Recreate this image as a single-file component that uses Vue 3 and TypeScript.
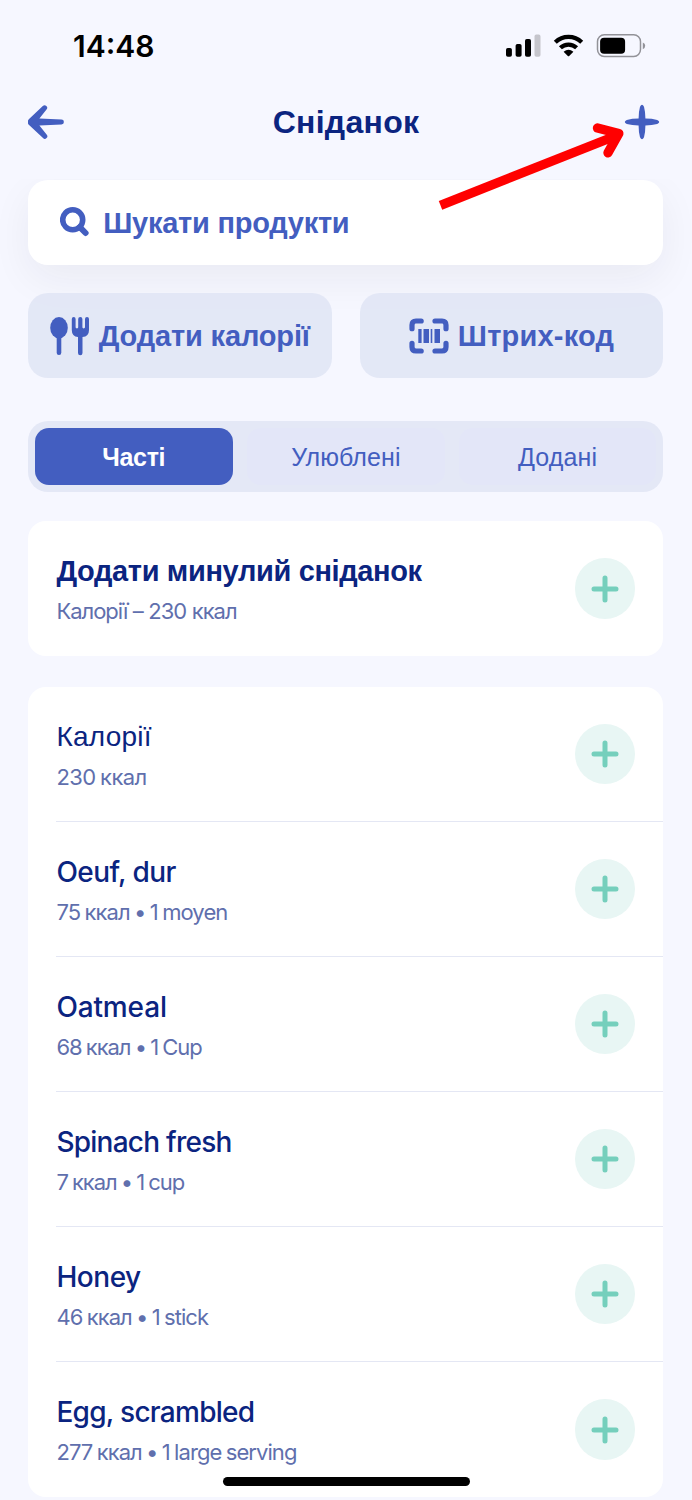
<script setup lang="ts">
interface Food {
  name: string
  detail: string
  nameSpacing: number
  detailSpacing: number
}

const tabs = ['Часті', 'Улюблені', 'Додані']

const foods: Food[] = [
  { name: 'Калорії', detail: '230 ккал', nameSpacing: 0.25, detailSpacing: -0.6 },
  { name: 'Oeuf, dur', detail: '75 ккал • 1 moyen', nameSpacing: -0.55, detailSpacing: -0.9 },
  { name: 'Oatmeal', detail: '68 ккал • 1 Cup', nameSpacing: -0.15, detailSpacing: -1.03 },
  { name: 'Spinach fresh', detail: '7 ккал • 1 cup', nameSpacing: -0.75, detailSpacing: -1.05 },
  { name: 'Honey', detail: '46 ккал • 1 stick', nameSpacing: -0.45, detailSpacing: -0.93 },
  { name: 'Egg, scrambled', detail: '277 ккал • 1 large serving', nameSpacing: -0.72, detailSpacing: -0.92 },
]
</script>

<template>
  <div class="screen">
    <div class="status">
      <span class="time">14:48</span>
      <svg class="indicators" width="140" height="24" viewBox="0 0 140 24">
        <rect x="0" y="14" width="5.9" height="8.7" rx="1.8" />
        <rect x="9.6" y="10" width="6" height="12.7" rx="1.8" />
        <rect x="19" y="5" width="6" height="17.7" rx="1.8" />
        <rect x="28.5" y="0.6" width="6" height="22.1" rx="1.8" fill="#c5c5cc" />
        <g fill="none" stroke="#000" stroke-width="4.3">
          <path d="M49.3 8.2A19 19 0 0 1 75.7 8.2" />
          <path d="M54.4 13.8A11.8 11.8 0 0 1 70.6 13.8" />
        </g>
        <path d="M57.6 17.7Q62.5 13.6 67.4 17.7L63.2 22Q62.5 22.6 61.8 22Z" />
        <rect x="91.5" y="0.8" width="43" height="21.6" rx="6.8" fill="none" stroke="#929298" stroke-width="1.5" />
        <rect x="94.1" y="3.7" width="25" height="16" rx="4" />
        <path d="M136.8 8.4Q139.2 9.4 139.2 11.8Q139.2 14.2 136.8 15.3Z" fill="#929298" />
      </svg>
    </div>

    <header class="header">
      <svg width="36" height="34" viewBox="0 0 36 34" class="back">
        <path d="M.8 14.3L14.8 1.1A2.5 2.5 0 0 1 18.5 4.5L11.4 13.6L33.5 14.6A2.4 2.4 0 0 1 33.5 19.4L11.4 20.4L18.6 29.5A2.5 2.5 0 0 1 15 33L.8 19.7Q-1.4 17 .8 14.3Z" />
      </svg>
      <h1>Сніданок</h1>
      <svg width="36" height="36" viewBox="0 0 36 36" class="add">
        <path d="M16 2.8Q18 -1.4 20 2.8Q21.4 8 21.4 14.6Q28 14.6 33.2 16Q37.2 18 33.2 20Q28 21.4 21.4 21.4Q21.4 28 20 33.2Q18 37.2 16 33.2Q14.6 28 14.6 21.4Q8 21.4 2.8 20Q-1.2 18 2.8 16Q8 14.6 14.6 14.6Q14.6 8 16 2.8Z" fill="#435ec0" />
      </svg>
    </header>

    <main class="content">
      <div class="search">
        <svg width="30" height="30" viewBox="0 0 30 30" fill="none" stroke="#435ec0">
          <circle cx="12.7" cy="12.8" r="10" stroke-width="5.6" />
          <path d="M19.8 20.2L25.6 26" stroke-width="6" stroke-linecap="round" />
        </svg>
        <span>Шукати продукти</span>
      </div>

      <div class="actions">
        <button class="calories">
          <svg width="40" height="40" viewBox="0 0 40 40" fill="#435ec0">
            <ellipse cx="9" cy="11.8" rx="8.8" ry="10.7" />
            <rect x="6.7" y="18" width="4.6" height="21" rx="2.2" />
            <path d="M21.8 3A1.9 1.9 0 0 1 25.6 3V11.3Q25.6 12.4 27 12.4Q28.2 12.4 28.2 11.3V3A1.9 1.9 0 0 1 32.4 3V11.3Q32.4 12.4 33.6 12.4Q35 12.4 35 11.3V3A1.9 1.9 0 0 1 39 3V14Q39 20.5 32.5 21V37A2.2 2.2 0 0 1 28 37V21Q21.8 20.5 21.8 14Z" />
          </svg>
          <span>Додати калорії</span>
        </button>
        <button class="barcode">
          <svg width="40" height="36" viewBox="0 0 40 36">
            <g fill="none" stroke="#435ec0" stroke-width="5.2" stroke-linecap="round">
              <path d="M3 10.7V7Q3 3 7 3H12.2M26 3H33Q37 3 37 7V10.7M3 25.3V29Q3 33 7 33H12.2M26 33H33Q37 33 37 29V25.3" />
            </g>
            <path d="M9.3 11H12.6V25H9.3ZM14.5 11H20V25H14.5ZM21.7 11H23.3V25H21.7ZM25.5 11H31V25H25.5Z" fill="#435ec0" />
          </svg>
          <span>Штрих-код</span>
        </button>
      </div>

      <nav class="tabs">
        <button v-for="(tab, i) in tabs" :key="tab" :class="{ active: i === 0 }">{{ tab }}</button>
      </nav>

      <section class="card">
        <div class="row">
          <div class="text">
            <div class="name strong">Додати минулий сніданок</div>
            <div class="detail previous">Калорії – 230 ккал</div>
          </div>
          <button class="plus" aria-label="Додати">
            <svg width="28" height="28" viewBox="0 0 28 28"><path d="M14 3V25M3 14H25" /></svg>
          </button>
        </div>
      </section>

      <section class="card list">
        <div v-for="food in foods" :key="food.name" class="row">
          <div class="text">
            <div class="name" :style="{ letterSpacing: food.nameSpacing + 'px' }">{{ food.name }}</div>
            <div class="detail" :style="{ letterSpacing: food.detailSpacing + 'px' }">{{ food.detail }}</div>
          </div>
          <button class="plus" aria-label="Додати">
            <svg width="28" height="28" viewBox="0 0 28 28"><path d="M14 3V25M3 14H25" /></svg>
          </button>
        </div>
      </section>
    </main>

    <svg class="pointer" width="200" height="100" viewBox="0 0 200 100" fill="none" stroke="#f00" stroke-width="9.4">
      <path d="M10.5 95.3L188 25" />
      <path d="M167.5 18L188.8 23.5L178 42.8" stroke-linecap="round" stroke-linejoin="round" />
    </svg>
    <div class="home-bar"></div>
  </div>
</template>

<style>
body {
  background: #f6f7ff;
}
</style>

<style scoped>
.screen {
  position: relative;
  width: 692px;
  height: 1500px;
  overflow: hidden;
  background: #f6f7ff;
  font-family: 'Liberation Sans', Arial, sans-serif;
  color: #0b2480;
}
button {
  border: 0;
  padding: 0;
  font: inherit;
}
svg {
  display: block;
  flex: none;
}
.status {
  height: 92px;
  padding: 0 46px 0 73px;
  display: flex;
  align-items: center;
  justify-content: space-between;
}
.time {
  font: 600 30px/36px Inter, sans-serif;
  color: #000;
}
.header {
  height: 60px;
  padding: 0 32px 0 28px;
  display: flex;
  align-items: center;
  justify-content: space-between;
}
.back {
  fill: #435ec0;
}
h1 {
  margin: 0;
  padding-left: 4px;
  font-size: 32px;
  line-height: 40px;
  letter-spacing: 0.3px;
}
.content {
  margin-top: 27px;
  height: 1321px;
  overflow: hidden;
  padding: 0.5px 28.6px 0 28.4px;
}
.search {
  height: 85.5px;
  border-radius: 20px;
  background: #fff;
  box-shadow: 0 14px 40px rgba(40, 35, 50, 0.06);
  display: flex;
  align-items: center;
  padding-left: 31.8px;
  gap: 13px;
  box-sizing: border-box;
  color: #435ec0;
  font-size: 29px;
  font-weight: 700;
  letter-spacing: -0.25px;
}
.search span,
.actions span {
  padding-top: 2px;
}
.actions {
  margin-top: 28px;
  display: grid;
  grid-template-columns: 1fr 1fr;
  gap: 28.5px;
}
.actions button {
  position: relative;
  height: 85px;
  border-radius: 20px;
  background: rgba(222, 227, 244, 0.8);
  color: #435ec0;
  display: flex;
  align-items: center;
  justify-content: center;
  gap: 8.5px;
  font-size: 29px;
  font-weight: 700;
  white-space: nowrap;
}
.actions .calories {
  letter-spacing: -0.15px;
}
.actions .barcode {
  letter-spacing: 0.2px;
}
.tabs {
  margin-top: 43px;
  height: 70.5px;
  border-radius: 20px;
  background: #e4e8f6;
  padding: 7px;
  box-sizing: border-box;
  display: grid;
  grid-template-columns: repeat(3, 1fr);
  gap: 14px;
}
.tabs button {
  padding-top: 2px;
  border-radius: 14px;
  background: #e3e6f8;
  color: #435ec0;
  font-size: 25px;
  letter-spacing: 0.1px;
}
.tabs .active {
  background: #435ec0;
  color: #fff;
  font-weight: 700;
  letter-spacing: -0.3px;
  padding-right: 1px;
}
.card {
  margin-top: 29px;
  border-radius: 18px;
  background: #fff;
}
.list {
  margin-top: 31px;
}
.row {
  height: 135px;
  box-sizing: border-box;
  margin-left: 28px;
  padding-right: 28px;
  display: flex;
  align-items: center;
  justify-content: space-between;
}
.row:not(:last-child) {
  border-bottom: 1px solid #e4e7f4;
}
.text {
  padding-top: 3px;
}
.name {
  font: 400 28px/36px 'Liberation Sans', Arial, sans-serif;
  white-space: nowrap;
}
.list .name {
  font-family: Inter, sans-serif;
  font-weight: 450;
}
.list .row:first-child .name {
  font-family: 'Liberation Sans', Arial, sans-serif;
  font-weight: 400;
}
.name.strong {
  font-size: 29px;
  font-weight: 700;
  letter-spacing: -0.36px;
}
.detail {
  margin-top: 7px;
  font: 400 22px/30px Inter, sans-serif;
  word-spacing: -1px;
  color: #606fad;
  white-space: nowrap;
}
.previous {
  letter-spacing: -1px;
  word-spacing: 0.3px;
}
.plus {
  width: 60.5px;
  height: 60.5px;
  margin-top: 1px;
  border-radius: 50%;
  background: #e8f6f4;
  display: flex;
  align-items: center;
  justify-content: center;
}
.plus path {
  stroke: #75cfbc;
  stroke-width: 5;
  stroke-linecap: round;
}
.pointer {
  position: absolute;
  left: 430px;
  top: 110px;
}
.home-bar {
  position: absolute;
  left: 222.5px;
  top: 1476.5px;
  width: 247px;
  height: 9px;
  border-radius: 5px;
  background: #000;
}
</style>
